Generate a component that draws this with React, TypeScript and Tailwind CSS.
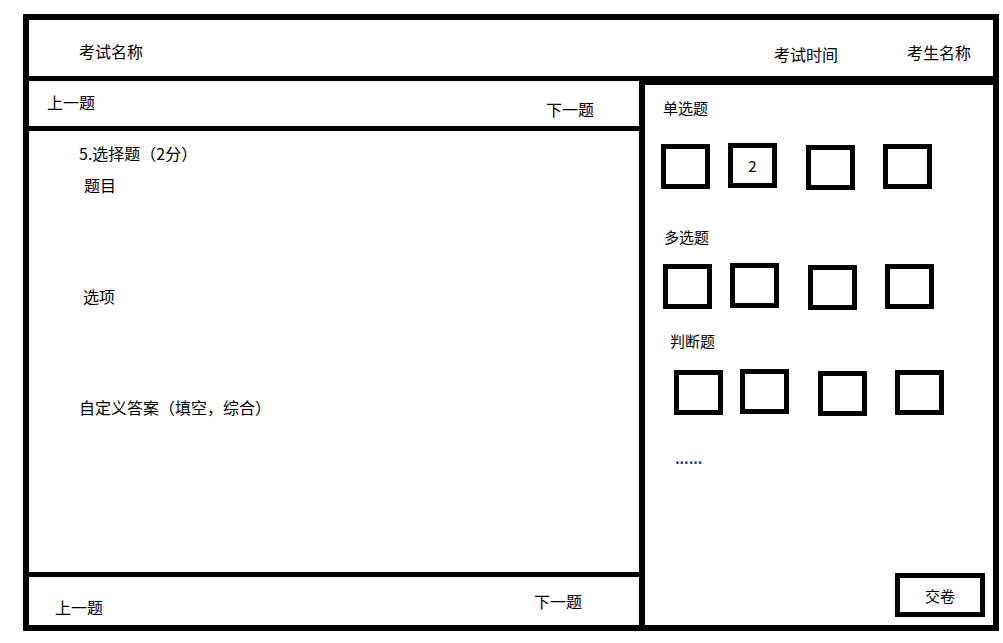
const font = { fontFamily: '"Noto Sans CJK SC", "Noto Sans", sans-serif' }

type BoxProps = { ml: string; mt: string; label?: string }

function Box({ ml, mt, label }: BoxProps) {
  return (
    <div
      className={`${ml} ${mt} w-[49px] h-[45px] border-[5px] border-black flex items-center justify-center text-[15px] leading-none`}
    >
      {label}
    </div>
  )
}

export default function App() {
  return (
    <div className="w-[1003px] h-[643px] bg-white pl-[23px] pt-[14px] text-black" style={font}>
      <div className="w-[976px] h-[617px] border-[6px] border-black flex flex-col">
        <header className="h-[61px] border-b-[5px] border-black flex items-start pl-[50px] pr-[22px] text-[16px] leading-none">
          <span className="mt-[23px]">考试名称</span>
          <span className="ml-auto mt-[26px]">考试时间</span>
          <span className="ml-[69px] mt-[24px]">考生名称</span>
        </header>

        <div className="flex flex-1">
          <div className="w-[610px] flex flex-col">
            <div className="h-[50px] border-b-[5px] border-black flex items-start pl-[18px] pr-[45px] text-[16px] leading-none">
              <span className="mt-[13px]">上一题</span>
              <span className="ml-auto mt-[20px]">下一题</span>
            </div>

            <div className="flex-1 border-b-[5px] border-black flex flex-col text-[16px] leading-none">
              <span className="ml-[50px] mt-[14px]">5.选择题（2分）</span>
              <span className="ml-[55px] mt-[16px]">题目</span>
              <span className="ml-[54px] mt-[95px]">选项</span>
              <span className="ml-[50px] mt-[95px]">自定义答案（填空，综合）</span>
            </div>

            <div className="h-[48px] flex items-start pl-[26px] pr-[57px] text-[16px] leading-none">
              <span className="mt-[22px]">上一题</span>
              <span className="ml-auto mt-[16px]">下一题</span>
            </div>
          </div>

          <aside className="flex-1 border-l-[6px] border-t-4 border-black flex flex-col text-[15px] leading-none">
            <span className="ml-[18px] mt-[15px]">单选题</span>
            <div className="flex items-start mt-[28px]">
              <Box ml="ml-[16px]" mt="mt-px" />
              <Box ml="ml-[18px]" mt="mt-0" label="2" />
              <Box ml="ml-[29px]" mt="mt-[2px]" />
              <Box ml="ml-[28px]" mt="mt-px" />
            </div>

            <span className="ml-[19px] mt-[39px]">多选题</span>
            <div className="flex items-start mt-[19px]">
              <Box ml="ml-[18px]" mt="mt-px" />
              <Box ml="ml-[18px]" mt="mt-0" />
              <Box ml="ml-[29px]" mt="mt-[2px]" />
              <Box ml="ml-[28px]" mt="mt-px" />
            </div>

            <span className="ml-[25px] mt-[23px]">判断题</span>
            <div className="flex items-start mt-[21px]">
              <Box ml="ml-[29px]" mt="mt-px" />
              <Box ml="ml-[17px]" mt="mt-0" />
              <Box ml="ml-[29px]" mt="mt-[2px]" />
              <Box ml="ml-[28px]" mt="mt-px" />
            </div>

            <span className="ml-[30px] mt-[35px] text-[#1f3f7a] text-[14px] font-bold">......</span>

            <button className="self-end mt-auto mb-[8px] mr-[8px] w-[90px] h-[44px] border-[5px] border-black flex items-center justify-center text-[15px]">
              交卷
            </button>
          </aside>
        </div>
      </div>
    </div>
  )
}
